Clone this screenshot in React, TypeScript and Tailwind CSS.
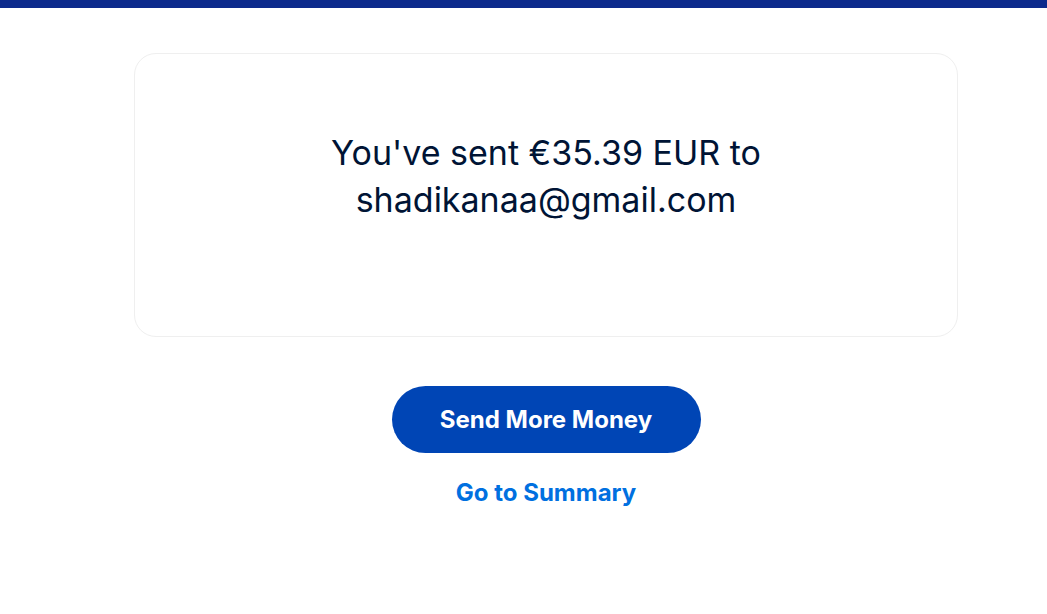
export default function App() {
  return (
    <div className="min-h-[614px] w-full bg-white" style={{ fontFamily: 'Inter, "Noto Sans", sans-serif' }}>
      <div className="h-[8px] w-full bg-[#0c2a8c]" />
      <div className="ml-[134px] flex w-[824px] flex-col items-center pt-[45px]">
        <div className="flex h-[284px] w-full flex-col items-center rounded-[22px] border border-[#efefef] pt-[75px]">
          <p className="text-center text-[34px] leading-[47px] text-[#001435]">
            You've sent €35.39 EUR to
            <br />
            shadikanaa@gmail.com
          </p>
        </div>
        <button className="mt-[49px] h-[67px] w-[309px] rounded-full bg-[#0045b5] text-[24px] font-bold text-white">
          Send More Money
        </button>
        <a className="mt-[22px] text-[24px] font-bold text-[#0070e0]">Go to Summary</a>
      </div>
    </div>
  );
}
